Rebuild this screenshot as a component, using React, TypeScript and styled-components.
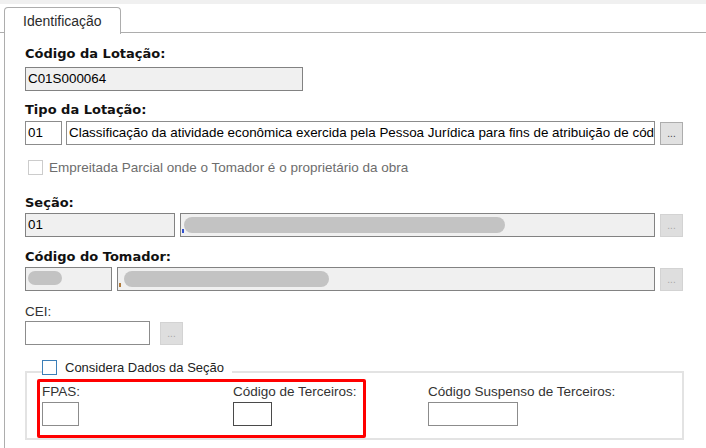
import styled, { createGlobalStyle } from 'styled-components';

const GlobalStyle = createGlobalStyle`
	html, body {
		margin: 0;
		padding: 0;
		background: #ffffff;
	}
	body {
		font-family: 'Liberation Sans', Arial, sans-serif;
		font-size: 13px;
		color: #000;
	}
`;

const Window = styled.div`
	width: 706px;
	height: 448px;
	overflow: hidden;
	background: #fff;
	border-top: 4px solid #f0f0f0;
	box-sizing: border-box;
`;

const TabBar = styled.div`
	display: flex;
	padding: 3px 0 0 4px;
	border-bottom: 1px solid #adadad;
	height: 29px;
	box-sizing: border-box;
`;

const Tab = styled.div`
	width: 117px;
	height: 27px;
	box-sizing: border-box;
	margin-bottom: -1px;
	border: 1px solid #adadad;
	border-bottom: none;
	border-radius: 4px 4px 0 0;
	background: #fff;
	padding: 5px 0 0 18px;
	font-size: 14px;
	color: #2b2b2b;
`;

const Panel = styled.div`
	margin-left: 4px;
	border-left: 1px solid #adadad;
	padding: 13px 0 0 20px;
	height: 420px;
	box-sizing: border-box;
`;

const Label = styled.div<{ $bold?: boolean; $gap: number; $top: number }>`
	font-family: ${(p) => (p.$bold ? "'DejaVu Sans'" : "'Liberation Sans'")}, sans-serif;
	font-size: ${(p) => (p.$bold ? '13px' : '13.5px')};
	font-weight: ${(p) => (p.$bold ? 700 : 400)};
	line-height: 16px;
	height: 16px;
	margin-top: ${(p) => p.$top}px;
	margin-bottom: ${(p) => p.$gap}px;
	color: ${(p) => (p.$bold ? '#111' : '#333')};
	white-space: nowrap;
`;

const Row = styled.div<{ $gap?: number }>`
	display: flex;
	align-items: flex-start;
	gap: ${(p) => p.$gap ?? 5}px;
	width: 659px;
`;

const Input = styled.div<{ $w: number; $readonly?: boolean; $dark?: boolean }>`
	position: relative;
	width: ${(p) => p.$w}px;
	height: 24px;
	box-sizing: border-box;
	flex: none;
	border: 1px solid ${(p) => (p.$dark ? '#4a4a4a' : p.$readonly ? '#828282' : '#8c8c8c')};
	background: ${(p) => (p.$readonly ? '#f0f0f0' : '#fff')};
	padding: 3px 0 0 2px;
	font-size: 13.4px;
	line-height: 16px;
	color: #000;
	white-space: nowrap;
	overflow: hidden;
	text-overflow: clip;
`;

const DotsButton = styled.div<{ $disabled?: boolean }>`
	width: 23px;
	height: 23px;
	margin-top: 1px;
	box-sizing: border-box;
	flex: none;
	border: 1px solid ${(p) => (p.$disabled ? '#d3d3d3' : '#adadad')};
	background: ${(p) => (p.$disabled ? '#dedede' : '#e1e1e1')};
	color: ${(p) => (p.$disabled ? '#a8a8a8' : '#444')};
	font-size: 10px;
	line-height: 10px;
	display: flex;
	align-items: flex-end;
	justify-content: center;
	padding-bottom: 5px;
`;

const Blur = styled.span<{ $left: number; $w: number; $h?: number }>`
	position: absolute;
	left: ${(p) => p.$left}px;
	top: 3px;
	width: ${(p) => p.$w}px;
	height: ${(p) => p.$h ?? 16}px;
	border-radius: 9px;
	background: #c3c3c3;
	filter: blur(0.6px);
`;

const Mark = styled.span<{ $color: string }>`
	position: absolute;
	left: 1px;
	bottom: 3px;
	width: 2px;
	height: 4px;
	background: ${(p) => p.$color};
`;

const CheckRow = styled.label<{ $disabled?: boolean }>`
	display: flex;
	align-items: center;
	gap: 6px;
	margin: 15px 0 0 3px;
	height: 14px;
	font-family: 'Liberation Sans', sans-serif;
	font-size: 13.5px;
	color: ${(p) => (p.$disabled ? '#6d6d6d' : '#222')};
	white-space: nowrap;
`;

const Box = styled.span<{ $color: string }>`
	width: 15px;
	height: 15px;
	box-sizing: border-box;
	border: 1px solid ${(p) => p.$color};
	background: #fff;
	flex: none;
`;

const Group = styled.fieldset`
	margin: 15px 0 0 0;
	width: 659px;
	height: 80px;
	box-sizing: border-box;
	border: 2px solid #e3e3e3;
	padding: 0;
`;

const Legend = styled.legend`
	margin-left: 15px;
	padding: 0 8px 0 0;
	height: 23px;
	display: flex;
	align-items: flex-start;
	gap: 8px;
	font-size: 13px;
	color: #222;
	line-height: 15px;
`;

const GroupRow = styled.div`
	display: flex;
	align-items: flex-start;
	margin-top: -4px;
`;

const Highlight = styled.div`
	display: flex;
	width: 329px;
	height: 59px;
	margin-left: 10px;
	box-sizing: border-box;
	border: 3px solid #ff0000;
	border-radius: 2px;
	padding: 2px 0 0 2px;
	gap: 153px;
`;

const Field = styled.div`
	display: flex;
	flex-direction: column;
`;

const SmallLabel = styled.div`
	font-size: 13.5px;
	line-height: 16px;
	color: #333;
	margin-bottom: 2px;
	white-space: nowrap;
`;

const SuspensoField = styled(Field)`
	margin: 5px 0 0 62px;
`;

export default function App() {
	return (
		<Window>
			<GlobalStyle />
			<TabBar>
				<Tab>Identificação</Tab>
			</TabBar>
			<Panel>
				<Label $bold $top={0} $gap={5}>Código da Lotação:</Label>
				<Row>
					<Input $w={278} $readonly>C01S000064</Input>
				</Row>

				<Label $bold $top={11} $gap={3}>Tipo da Lotação:</Label>
				<Row $gap={4}>
					<Input $w={37}>01</Input>
					<Input $w={589}>
						Classificação da atividade econômica exercida pela Pessoa Jurídica para fins de atribuição de cód
					</Input>
					<DotsButton style={{ marginLeft: 1 }}>...</DotsButton>
				</Row>

				<CheckRow $disabled>
					<Box $color="#cccccc" />
					Empreitada Parcial onde o Tomador é o proprietário da obra
				</CheckRow>

				<Label $bold $top={21} $gap={2}>Seção:</Label>
				<Row>
					<Input $w={150} $readonly>01</Input>
					<Input $w={475} $readonly>
						<Mark $color="#3050d0" />
						<Blur $left={3} $w={321} />
					</Input>
					<DotsButton $disabled>...</DotsButton>
				</Row>

				<Label $bold $top={12} $gap={2}>Código do Tomador:</Label>
				<Row>
					<Input $w={87} $readonly>
						<Blur $left={2} $w={34} $h={14} />
					</Input>
					<Input $w={538} $readonly>
						<Mark $color="#b07a3a" />
						<Blur $left={6} $w={205} />
					</Input>
					<DotsButton $disabled>...</DotsButton>
				</Row>

				<Label $top={13} $gap={1}>CEI:</Label>
				<Row $gap={10}>
					<Input $w={125} />
					<DotsButton $disabled>...</DotsButton>
				</Row>

				<Group>
					<Legend>
						<Box $color="#3c7fb8" />
						Considera Dados da Seção
					</Legend>
					<GroupRow>
						<Highlight>
							<Field>
								<SmallLabel>FPAS:</SmallLabel>
								<Input $w={37} />
							</Field>
							<Field>
								<SmallLabel>Código de Terceiros:</SmallLabel>
								<Input $w={39} $dark />
							</Field>
						</Highlight>
						<SuspensoField>
							<SmallLabel>Código Suspenso de Terceiros:</SmallLabel>
							<Input $w={90} />
						</SuspensoField>
					</GroupRow>
				</Group>
			</Panel>
		</Window>
	);
}
